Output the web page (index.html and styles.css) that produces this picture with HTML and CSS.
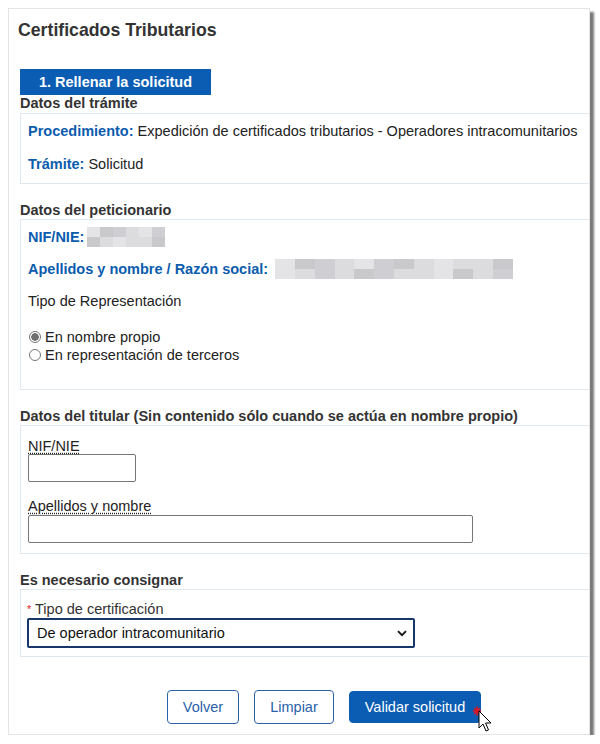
FILE: index.html
```html
<!DOCTYPE html>
<html lang="es">
<head>
    <meta charset="UTF-8" />
    <title>Certificados Tributarios</title>
    <link rel="stylesheet" href="styles.css">
</head>
<body>
    <div class="card">
        <h1 class="title">Certificados Tributarios</h1>
        <div class="step">1. Rellenar la solicitud</div>

        <!-- Datos del tramite -->
        <h2 class="sec-title first">Datos del trámite</h2>
        <div class="box box-tramite">
            <p class="row"><b class="key">Procedimiento:</b> Expedición de certificados tributarios - Operadores intracomunitarios</p>
            <p class="row gap"><b class="key">Trámite:</b> Solicitud</p>
        </div>

        <!-- Datos del peticionario -->
        <h2 class="sec-title">Datos del peticionario</h2>
        <div class="box box-peticionario">
            <p class="row"><b class="key">NIF/NIE:</b> <span class="blur blur-nif"><i></i><i></i><i></i><i></i><i></i><i></i><i></i><i></i><i></i><i></i><i></i><i></i></span></p>
            <p class="row gap"><b class="key">Apellidos y nombre / Razón social:</b> <span class="blur blur-name"><i></i><i></i><i></i><i></i><i></i><i></i><i></i><i></i><i></i><i></i><i></i><i></i><i></i><i></i><i></i><i></i><i></i><i></i><i></i><i></i><i></i><i></i><i></i><i></i></span></p>
            <p class="row gap">Tipo de Representación</p>
            <div class="radios">
                <label class="radio"><input type="radio" name="rep" checked> En nombre propio</label>
                <label class="radio"><input type="radio" name="rep"> En representación de terceros</label>
            </div>
        </div>

        <!-- Datos del titular -->
        <h2 class="sec-title">Datos del titular (Sin contenido sólo cuando se actúa en nombre propio)</h2>
        <div class="box box-titular">
            <label class="field-label">NIF/NIE</label>
            <input class="text-input nif" type="text">
            <label class="field-label second">Apellidos y nombre</label>
            <input class="text-input nombre" type="text">
        </div>

        <!-- Es necesario consignar -->
        <h2 class="sec-title">Es necesario consignar</h2>
        <div class="box box-consignar">
            <div class="req-label"><span class="req">*</span> Tipo de certificación</div>
            <div class="select-wrap">
                <select class="select">
                    <option>De operador intracomunitario</option>
                </select>
                <svg class="chevron" width="10" height="7" viewBox="0 0 10 7"><path d="M1 1.2 L5 5.2 L9 1.2" fill="none" stroke="#111" stroke-width="1.8"/></svg>
            </div>
        </div>

        <div class="actions">
            <button class="btn btn-outline volver">Volver</button>
            <button class="btn btn-outline limpiar">Limpiar</button>
            <button class="btn btn-primary validar">Validar solicitud
                <svg class="cursor" width="20" height="30" viewBox="0 0 20 30">
                    <g stroke="#e0141e" stroke-width="1.6" stroke-linecap="round">
                        <path d="M4 3 L4 11"/><path d="M0.5 7 L7.5 7"/><path d="M1.5 4.5 L6.5 9.5"/><path d="M6.5 4.5 L1.5 9.5"/>
                    </g>
                    <path d="M6 7 L6 24 L10 20 L13 27 L15.5 26 L12.6 19 L18 19 Z" fill="#fff" stroke="#000" stroke-width="1" stroke-linejoin="round"/>
                </svg>
            </button>
        </div>
    </div>
</body>
</html>
```

FILE: styles.css
```css
* {
    margin: 0;
    padding: 0;
    box-sizing: border-box;
}

body {
    font-family: "Liberation Sans", Arial, sans-serif;
    font-size: 14.5px;
    color: #222;
    background-color: #fff;
}

.card {
    overflow: hidden;
    width: 582px;
    margin: 8px 0 0 8px;
    padding: 11px 0 10px 11px;
    border: 1px solid #e4e4e4;
    box-shadow: 4px 4px 2px #7a7a7a;
    background-color: #fff;
}

.title {
    margin-left: -2px;
    font-size: 17.7px;
    line-height: 20px;
    font-weight: bold;
    color: #333;
}

.step {
    width: 191px;
    height: 26px;
    margin-top: 29px;
    background-color: #0b5db3;
    color: #fff;
    font-weight: bold;
    font-size: 14.5px;
    line-height: 26px;
    text-align: center;
}

.sec-title {
    margin-top: 18px;
    font-size: 14.5px;
    line-height: 16px;
    font-weight: bold;
    color: #333;
}

.sec-title.first {
    margin-top: 0;
}

.box {
    margin: 1px -30px 0 0;
    padding: 9px 0 0 7px;
    border: 1px solid #dfe7ef;
}

.box-tramite {
    margin-top: 2px;
    height: 71px;
}

.box-peticionario {
    height: 171px;
}

.box-titular {
    height: 129px;
    padding-top: 12px;
}

.box-consignar {
    height: 68px;
    padding-top: 11px;
    padding-left: 6px;
}

.row {
    height: 16px;
    line-height: 16px;
    white-space: nowrap;
}

.row.gap {
    margin-top: 17px;
}

.box-peticionario .row.gap {
    margin-top: 16px;
}

.key {
    color: #0b5cad;
}

/* datos pixelados */
.blur {
    display: inline-flex;
    flex-wrap: wrap;
    vertical-align: top;
    height: 20px;
    margin-top: -2px;
}

.blur i {
    width: 13px;
    height: 10px;
    background-color: #dcdcdf;
}

.blur i:nth-child(3n) {
    background-color: #cfcfd3;
}

.blur i:nth-child(4n+1) {
    background-color: #e4e4e6;
}

.blur i:nth-child(5n+2) {
    background-color: #c9c9cc;
}

.blur-nif {
    width: 78px;
    margin-left: -1px;
}

.blur-name {
    width: 238px;
    margin-left: 3px;
}

.blur-name i {
    width: 19.8px;
}

.radios {
    margin-top: 19px;
}

.radio {
    display: flex;
    align-items: center;
    line-height: 18px;
}

.radio input {
    appearance: none;
    width: 12px;
    height: 12px;
    margin: 0 4px 0 1px;
    border: 1px solid #767676;
    border-radius: 50%;
    background-color: #fff;
}

.radio input:checked {
    background: radial-gradient(circle, #6f6f6f 0 3.5px, #fff 4px);
}

.field-label {
    display: block;
    line-height: 16px;
    text-decoration: underline dotted;
    text-underline-offset: 2px;
    color: #222;
}

.field-label.second {
    margin-top: 16px;
}

.text-input {
    display: block;
    height: 28px;
    border: 1px solid #767676;
    border-radius: 2px;
    background-color: #fff;
}

.nif {
    width: 108px;
}

.nombre {
    width: 445px;
    height: 28px;
    margin-top: 1px;
}

.req-label {
    line-height: 16px;
    color: #333;
}

.req {
    color: #d22;
    font-size: 11px;
    vertical-align: top;
}

.select-wrap {
    position: relative;
    width: 388px;
    margin-top: 1px;
}

.select {
    appearance: none;
    display: block;
    width: 388px;
    height: 30px;
    padding-left: 8px;
    border: 2px solid #17376a;
    border-radius: 2px;
    background-color: #fff;
    font-family: "Liberation Sans", Arial, sans-serif;
    font-size: 14.5px;
    color: #111;
}

.chevron {
    position: absolute;
    right: 8px;
    top: 12px;
}

.actions {
    display: flex;
    gap: 15px;
    margin-top: 33px;
    padding-left: 147px;
    align-items: center;
}

.btn {
    position: relative;
    height: 34px;
    border-radius: 4px;
    font-family: "Liberation Sans", Arial, sans-serif;
    font-size: 14.5px;
    cursor: pointer;
}

.btn-outline {
    border: 1px solid #2a62a9;
    background-color: #fff;
    color: #2a62a9;
}

.volver {
    width: 72px;
}

.limpiar {
    width: 80px;
}

.btn-primary {
    width: 132px;
    height: 32px;
    border: 1px solid #0b5db3;
    background-color: #0b5db3;
    color: #fff;
}

.cursor {
    position: absolute;
    left: 123px;
    top: 12px;
}
```
